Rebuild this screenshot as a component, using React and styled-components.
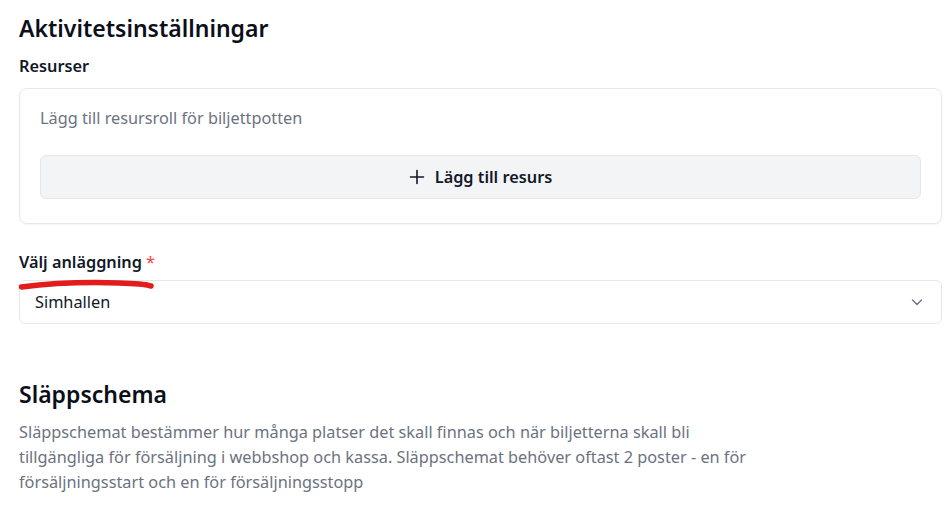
import React from "react";
import styled, { createGlobalStyle } from "styled-components";

const Global = createGlobalStyle`
  html, body { margin: 0; padding: 0; background: #fff; }
  body { font-family: "Segoe UI", "Noto Sans", "Open Sans", sans-serif; color: #111827; }
  * { box-sizing: border-box; }
`;

const Page = styled.div`
  padding: 10px 10px 0 19px;
  display: flex;
  flex-direction: column;
`;

const Title = styled.h2`
  margin: 0;
  font-size: 23px;
  font-weight: 600;
  line-height: 36px;
  color: #0b0f19;
`;

const SubTitle = styled.div`
  margin-top: 8px;
  font-size: 16.3px;
  font-weight: 600;
  line-height: 24px;
  color: #111827;
`;

const Label = styled.div`
  position: relative;
  font-size: 16.3px;
  font-weight: 600;
  line-height: 24px;
  color: #111827;
  display: inline-flex;
  gap: 4px;
`;

const Req = styled.span`
  color: #ef4444;
  font-weight: 400;
`;

const Card = styled.div`
  margin-top: 10px;
  border: 1px solid #e5e7eb;
  border-radius: 8px;
  box-shadow: 0 1px 2px rgba(0, 0, 0, 0.05);
  padding: 17px 20px 24px;
  display: flex;
  flex-direction: column;
  gap: 25px;
`;

const Hint = styled.div`
  font-size: 16.3px;
  line-height: 24px;
  color: #6b7280;
`;

const AddButton = styled.button`
  height: 44px;
  border: 1px solid #e5e7eb;
  border-radius: 6px;
  background: #f3f4f6;
  display: flex;
  align-items: center;
  justify-content: center;
  gap: 10px;
  font-family: inherit;
  font-size: 16.3px;
  font-weight: 600;
  color: #111827;
`;

const Field = styled.div`
  margin-top: 26px;
  display: flex;
  flex-direction: column;
  gap: 6px;
`;

const Select = styled.div`
  height: 44px;
  border: 1px solid #e5e7eb;
  border-radius: 6px;
  padding: 0 16px 0 15px;
  display: flex;
  align-items: center;
  justify-content: space-between;
  font-size: 16.3px;
  color: #111827;
`;

const Section = styled.div`
  margin-top: 52px;
  display: flex;
  flex-direction: column;
  gap: 8px;
`;

const Desc = styled.p`
  margin: 0;
  font-size: 16.3px;
  line-height: 25px;
  color: #6b7280;
`;

const Mark = styled.svg`
  position: absolute;
  left: 0;
  top: 30px;
  overflow: visible;
  z-index: 2;
`;

export default function App() {
  return (
    <>
      <Global />
      <Page>
        <Title>Aktivitetsinställningar</Title>
        <SubTitle>Resurser</SubTitle>
        <Card>
          <Hint>Lägg till resursroll för biljettpotten</Hint>
          <AddButton>
            <svg width="16" height="16" viewBox="0 0 16 16" fill="none" stroke="#111827" strokeWidth="1.6" strokeLinecap="round">
              <path d="M8 1.5v13M1.5 8h13" />
            </svg>
            Lägg till resurs
          </AddButton>
        </Card>
        <Field>
          <div>
            <Label>
              Välj anläggning<Req>*</Req>
              <Mark width="136" height="10" viewBox="0 0 136 10">
                <path d="M2.5 7 C 30 3.5, 70 2, 100 3 S 128 5, 132 6" stroke="#e21b1b" strokeWidth="5.5" fill="none" strokeLinecap="round" />
              </Mark>
            </Label>
          </div>
          <Select>
            <span>Simhallen</span>
            <svg width="16" height="16" viewBox="0 0 16 16" fill="none" stroke="#6b7280" strokeWidth="1.4" strokeLinecap="round" strokeLinejoin="round">
              <path d="M3.5 6l4.5 4.5L12.5 6" />
            </svg>
          </Select>
        </Field>
        <Section>
          <Title>Släppschema</Title>
          <Desc>
            Släppschemat bestämmer hur många platser det skall finnas och när biljetterna skall bli
            <br />
            tillgängliga för försäljning i webbshop och kassa. Släppschemat behöver oftast 2 poster - en för
            <br />
            försäljningsstart och en för försäljningsstopp
          </Desc>
        </Section>
      </Page>
    </>
  );
}
